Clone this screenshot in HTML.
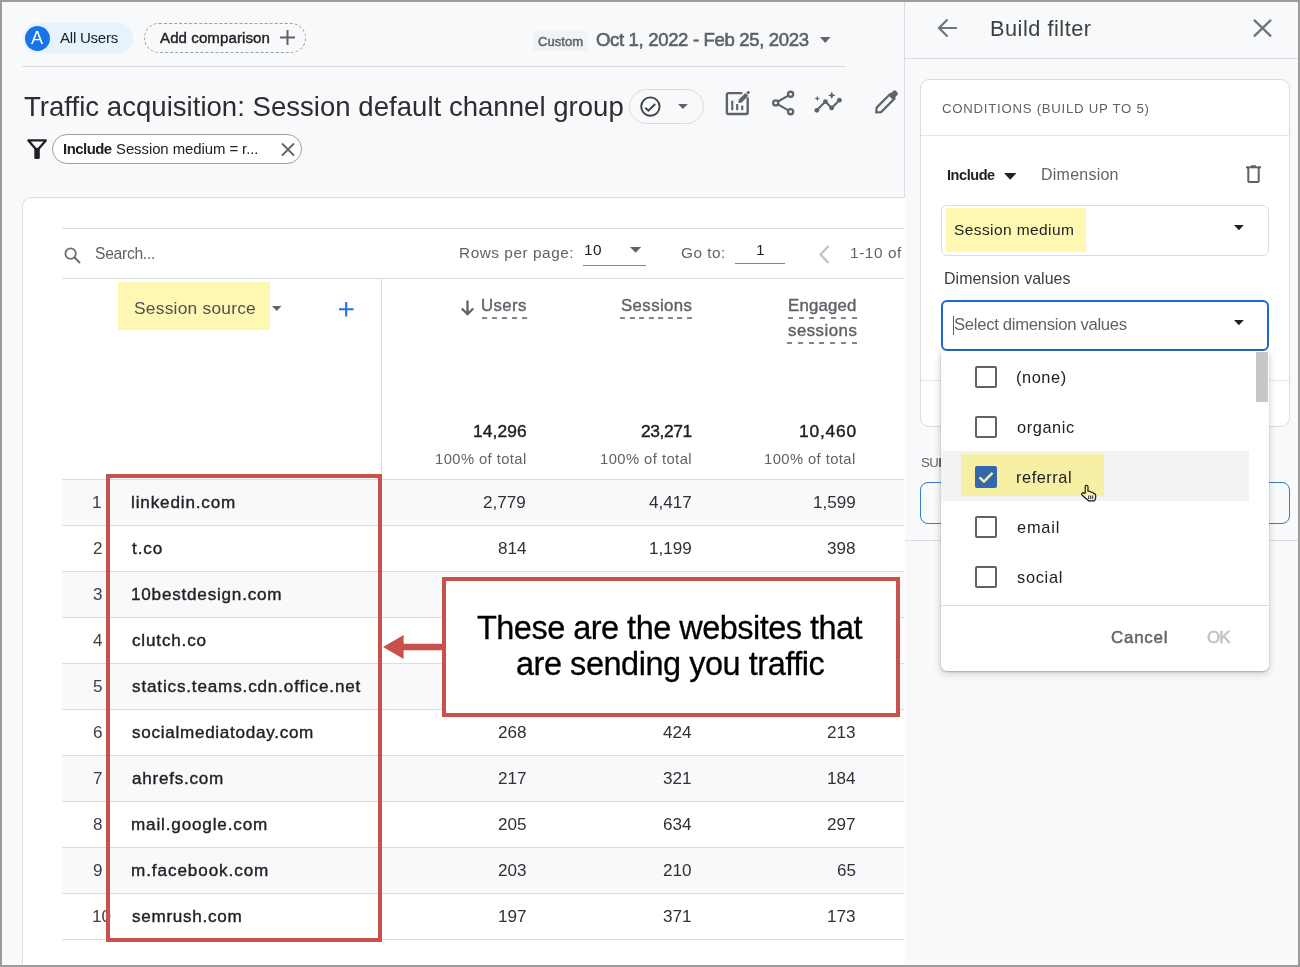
<!DOCTYPE html>
<html><head><meta charset="utf-8"><style>
html,body{margin:0;padding:0;}
body{width:1300px;height:967px;position:relative;overflow:hidden;background:#9c9c9c;font-family:"Liberation Sans",sans-serif;}
.a{position:absolute;box-sizing:border-box;}
.t{position:absolute;white-space:nowrap;will-change:transform;}
svg{position:absolute;overflow:visible;}
</style></head><body>
<!-- frame -->
<div class="a" style="left:2px;top:2px;width:1296px;height:963px;background:#f8f9fa;"></div>
<!-- panel divider -->
<div class="a" style="left:904px;top:2px;width:1px;height:963px;background:#dadce0;"></div>
<div class="a" style="left:905px;top:58px;width:393px;height:1px;background:#dadce0;"></div>

<!-- All users pill -->
<div class="a" style="left:23px;top:23px;width:110px;height:30px;border-radius:15px;background:#e6f3fd;"></div>
<div class="a" style="left:25px;top:26px;width:25px;height:25px;border-radius:50%;background:#1a73e8;"></div>
<!-- Add comparison pill -->
<div class="a" style="left:144px;top:23px;width:162px;height:30px;border-radius:15px;border:1px dashed #9aa0a6;"></div>
<svg style="left:280px;top:30px" width="15" height="15"><path d="M7.5 0V15M0 7.5H15" stroke="#5f6368" stroke-width="2"/></svg>
<!-- header line -->
<div class="a" style="left:22px;top:66px;width:824px;height:1px;background:#dadce0;"></div>
<!-- custom -->
<div class="a" style="left:533px;top:31px;width:55px;height:20px;border-radius:2px;background:#f1f3f4;"></div>
<svg style="left:820px;top:37px" width="11" height="6"><path d="M0 0H10.5L5.25 6Z" fill="#5f6368"/></svg>

<!-- title pill -->
<div class="a" style="left:629px;top:89px;width:75px;height:35px;border-radius:18px;border:1px solid #dadce0;"></div>
<svg style="left:640px;top:96px" width="22" height="22" viewBox="0 0 22 22"><circle cx="10.4" cy="10.6" r="9.2" fill="none" stroke="#3c4043" stroke-width="1.9"/><path d="M5.2 11.6L8.4 14.7L15.2 8" fill="none" stroke="#3c4043" stroke-width="1.9"/></svg>
<svg style="left:678.2px;top:104.2px" width="10" height="6"><path d="M0 0H9.8L4.9 4.9Z" fill="#5f6368"/></svg>
<!-- top icons (page coords) -->
<svg style="left:0;top:0;z-index:2" width="1300" height="200" viewBox="0 0 1300 200">
<g fill="none" stroke="#5f6368">
<path d="M742.3 93.1H728.4Q726.9 93.1 726.9 94.6V112.5Q726.9 114 728.4 114H746.2Q747.7 114 747.7 112.5V97.5" stroke-width="2.4"/>
<circle cx="790.6" cy="94.3" r="2.55" stroke-width="2.3"/><circle cx="775.7" cy="102.9" r="2.55" stroke-width="2.3"/><circle cx="790.6" cy="111.7" r="2.55" stroke-width="2.3"/>
<path d="M778 101.5L788.3 95.6M778 104.3L788.3 110.3" stroke-width="2.1"/>
<path d="M816.8 110.3L825.4 101.6L831.6 107.9L839.4 100.2" stroke-width="2.1"/>
<path d="M876.2 112.5L876.6 107.6L890.2 94L894.7 98.5L881.1 112.1Z" stroke-width="2.2" stroke-linejoin="round"/>
</g>
<g fill="#5f6368">
<rect x="731.2" y="100.7" width="2.1" height="9.5"/><rect x="736.1" y="104" width="2.1" height="6.2"/><rect x="741.2" y="105.6" width="2.1" height="4.6"/>
<path d="M738.3 102.9L738.8 99.5L745.4 92.9L748.3 95.8L741.7 102.4Z"/><circle cx="748.2" cy="92.6" r="1.6"/>
<circle cx="816.8" cy="110.3" r="2.4"/><circle cx="825.4" cy="101.6" r="2.4"/><circle cx="831.6" cy="107.9" r="2.4"/><circle cx="839.4" cy="100.2" r="2.4"/>
<path d="M817.3 95.6L818 97.8L820.2 98.5L818 99.2L817.3 101.4L816.6 99.2L814.4 98.5L816.6 97.8Z"/>
<path d="M831.8 91.6L832.9 94.3L835.6 95.4L832.9 96.5L831.8 99.2L830.7 96.5L828 95.4L830.7 94.3Z"/>
<path d="M888.6 95.6L893.1 91.1Q894.6 89.6 896.1 91.1L897.2 92.2Q898.7 93.7 897.2 95.2L892.7 99.7Z"/>
</g>
<path d="M28.4 140.4H45.8L37.1 150.6Z" fill="none" stroke="#202124" stroke-width="2.3" stroke-linejoin="round"/>
<rect x="34.3" y="148" width="5.5" height="11" rx="1.6" fill="#202124"/>
</svg>
<!-- include chip -->
<div class="a" style="left:52px;top:134px;width:250px;height:30px;border-radius:15px;border:1px solid #9aa0a6;background:#fff;"></div>
<svg style="left:281px;top:142.5px" width="14" height="13" viewBox="0 0 14 13"><path d="M1 0.5L13 12.5M13 0.5L1 12.5" stroke="#5f6368" stroke-width="1.8"/></svg>

<!-- table card -->
<div class="a" style="left:22px;top:197px;width:900px;height:800px;border-radius:9px;border:1px solid #dadce0;background:#fff;"></div>
<div class="a" style="left:0;top:0;width:1300px;height:967px;border:2px solid #9c9c9c;z-index:50"></div>
<div class="a" style="left:62px;top:228px;width:842px;height:1px;background:#dadce0;"></div>
<div class="a" style="left:62px;top:278px;width:842px;height:1px;background:#dadce0;"></div>
<svg style="left:64px;top:247px" width="17" height="17" viewBox="0 0 17 17"><circle cx="6.6" cy="6.6" r="5.2" fill="none" stroke="#6a6e73" stroke-width="1.8"/><path d="M10.3 10.3L16 16" stroke="#6a6e73" stroke-width="2"/></svg>
<svg style="left:629.5px;top:247px" width="12" height="6"><path d="M0 0H11.2L5.6 5.7Z" fill="#5f6368"/></svg>
<div class="a" style="left:583px;top:265px;width:63px;height:1px;background:#80868b;"></div>
<div class="a" style="left:735px;top:263px;width:50px;height:1px;background:#80868b;"></div>
<svg style="left:819px;top:245px" width="11" height="19" viewBox="0 0 11 19"><path d="M9.5 1L1.5 9.5L9.5 18" fill="none" stroke="#bdc1c6" stroke-width="2.2"/></svg>

<!-- header -->
<div class="a" style="left:118px;top:282px;width:152px;height:48px;background:#fff8b3;"></div>
<svg style="left:272px;top:306px" width="10" height="6"><path d="M0 0H9.5L4.75 5Z" fill="#5f6368"/></svg>
<svg style="left:339px;top:301.5px" width="15" height="15"><path d="M7.2 0V14.5M0 7.2H14.5" stroke="#1a73e8" stroke-width="2.1"/></svg>
<div class="a" style="left:381px;top:278px;width:1px;height:661px;background:#dadce0;"></div>
<svg style="left:460px;top:300px" width="15" height="16" viewBox="0 0 15 16"><path d="M7.5 0.5V14M1.8 8.5L7.5 14.2L13.2 8.5" fill="none" stroke="#5f6368" stroke-width="2.3"/></svg>
<!-- dashed underlines -->
<div class="a" style="left:482px;top:317px;width:45px;height:2px;background:repeating-linear-gradient(90deg,#80868b 0 5px,transparent 5px 10px);"></div>
<div class="a" style="left:620px;top:317px;width:72px;height:2px;background:repeating-linear-gradient(90deg,#80868b 0 5px,transparent 5px 9.57px);"></div>
<div class="a" style="left:788px;top:317px;width:69px;height:2px;background:repeating-linear-gradient(90deg,#80868b 0 5px,transparent 5px 10.67px);"></div>
<div class="a" style="left:787px;top:342px;width:70px;height:2px;background:repeating-linear-gradient(90deg,#80868b 0 5px,transparent 5px 10.83px);"></div>

<!-- rows -->
<div class="a" style="left:62px;top:479px;width:842px;height:1px;background:#dadce0;"></div>
<div class="a" style="left:62px;top:480px;width:842px;height:45px;background:#f8f9fa;"></div>
<div class="a" style="left:62px;top:525px;width:842px;height:1px;background:#dadce0;"></div>
<div class="a" style="left:62px;top:571px;width:842px;height:1px;background:#dadce0;"></div>
<div class="a" style="left:62px;top:572px;width:842px;height:45px;background:#f8f9fa;"></div>
<div class="a" style="left:62px;top:617px;width:842px;height:1px;background:#dadce0;"></div>
<div class="a" style="left:62px;top:663px;width:842px;height:1px;background:#dadce0;"></div>
<div class="a" style="left:62px;top:664px;width:842px;height:45px;background:#f8f9fa;"></div>
<div class="a" style="left:62px;top:709px;width:842px;height:1px;background:#dadce0;"></div>
<div class="a" style="left:62px;top:755px;width:842px;height:1px;background:#dadce0;"></div>
<div class="a" style="left:62px;top:756px;width:842px;height:45px;background:#f8f9fa;"></div>
<div class="a" style="left:62px;top:801px;width:842px;height:1px;background:#dadce0;"></div>
<div class="a" style="left:62px;top:847px;width:842px;height:1px;background:#dadce0;"></div>
<div class="a" style="left:62px;top:848px;width:842px;height:45px;background:#f8f9fa;"></div>
<div class="a" style="left:62px;top:893px;width:842px;height:1px;background:#dadce0;"></div>
<div class="a" style="left:62px;top:939px;width:842px;height:1px;background:#dadce0;"></div>
<!-- re-cover panel area (card extends under panel) -->
<div class="a" style="left:905px;top:59px;width:393px;height:906px;background:#f8f9fa;z-index:0"></div>

<!-- red box -->
<div class="a" style="left:106px;top:474px;width:276px;height:468px;border:4px solid #c9514b;z-index:5"></div>
<!-- annotation -->
<div class="a" style="left:442px;top:577px;width:458px;height:140px;border:4px solid #c9514b;background:#fff;"></div>
<svg style="left:382px;top:634px" width="62" height="26" viewBox="0 0 62 26"><path d="M1 13L21.6 1V9.7H61V16.3H21.6V25Z" fill="#c9514b"/></svg>

<!-- ===== right panel ===== -->
<svg style="left:937px;top:18px" width="21" height="20" viewBox="0 0 21 20"><path d="M20 10H2.5M10.5 1.5L2 10L10.5 18.5" fill="none" stroke="#70757a" stroke-width="2.2"/></svg>
<svg style="left:1253px;top:19px" width="19" height="18" viewBox="0 0 19 18"><path d="M1 0.8L18 17.3M18 0.8L1 17.3" stroke="#70757a" stroke-width="2.3"/></svg>

<div class="a" style="left:920px;top:79px;width:370px;height:348px;border-radius:9px;border:1px solid #dadce0;background:#fff;"></div>
<div class="a" style="left:921px;top:135px;width:368px;height:1px;background:#e3e5e8;"></div>
<div class="a" style="left:921px;top:380px;width:368px;height:1px;background:#e3e5e8;"></div>
<svg style="left:1003.5px;top:172.5px" width="13" height="7"><path d="M0 0H12.5L6.25 6.8Z" fill="#202124"/></svg>
<svg style="left:1245px;top:165px" width="17" height="18" viewBox="0 0 17 18"><path d="M1 2.3H16" stroke="#5f6368" stroke-width="2"/><path d="M6 1.2H11" stroke="#5f6368" stroke-width="2"/><path d="M3.3 3V16.2Q3.3 17 4.1 17H12.9Q13.7 17 13.7 16.2V3" fill="none" stroke="#5f6368" stroke-width="2"/></svg>
<!-- session medium select -->
<div class="a" style="left:941px;top:205px;width:328px;height:51px;border-radius:6px;border:1px solid #dadce0;"></div>
<div class="a" style="left:946px;top:208px;width:140px;height:44px;background:#fff8b3;"></div>
<svg style="left:1234px;top:224.5px" width="10" height="5.5"><path d="M0 0H9.8L4.9 5.2Z" fill="#202124"/></svg>
<!-- blue select -->
<div class="a" style="left:941px;top:300px;width:328px;height:51px;border-radius:6px;border:2px solid #1b67cc;background:#fff;"></div>
<div class="a" style="left:953px;top:316px;width:1px;height:19px;background:#1b67cc;"></div>
<svg style="left:1234px;top:319.5px" width="10" height="5.5"><path d="M0 0H9.8L4.9 5.2Z" fill="#202124"/></svg>
<!-- SU section -->
<div class="a" style="left:939px;top:457.6px;width:1.5px;height:9.2px;background:#6a6e73;z-index:1"></div>
<div class="a" style="left:920px;top:482px;width:370px;height:42px;border-radius:8px;border:1px solid #3b78d0;"></div>
<div class="a" style="left:905px;top:540px;width:393px;height:1px;background:#dadce0;"></div>

<!-- dropdown -->
<div class="a" style="left:941px;top:351px;width:328px;height:320px;background:#fff;border-radius:0 0 6px 6px;box-shadow:0 3px 8px rgba(0,0,0,0.16), 0 1px 2px rgba(0,0,0,0.22), -2px 0 4px rgba(0,0,0,0.05);z-index:10"></div>
<div class="a" style="left:1256px;top:352px;width:12px;height:50px;background:#c7c7c7;z-index:11"></div>
<div class="a" style="left:941px;top:451px;width:308px;height:50px;background:#f3f3f3;z-index:11"></div>
<div class="a" style="left:961px;top:454px;width:143px;height:42px;background:#f5f0a3;z-index:11"></div>
<div class="a" style="left:975px;top:365.5px;width:22px;height:22px;border:2px solid #5f6368;border-radius:2px;z-index:11"></div>
<div class="a" style="left:975px;top:415.5px;width:22px;height:22px;border:2px solid #5f6368;border-radius:2px;z-index:11"></div>
<div class="a" style="left:975px;top:465.5px;width:22px;height:22px;background:#3468ab;border-radius:2px;z-index:11"></div>
<svg style="left:975px;top:465.5px;z-index:12" width="22" height="22" viewBox="0 0 22 22"><path d="M4.5 11.3L9 15.6L17.5 6.8" fill="none" stroke="#f5f0a3" stroke-width="2.4"/></svg>
<div class="a" style="left:975px;top:515.5px;width:22px;height:22px;border:2px solid #5f6368;border-radius:2px;z-index:11"></div>
<div class="a" style="left:975px;top:565.5px;width:22px;height:22px;border:2px solid #5f6368;border-radius:2px;z-index:11"></div>
<div class="a" style="left:941px;top:605px;width:328px;height:1px;background:#dadce0;z-index:11"></div>
<!-- hand cursor -->
<svg style="left:1080px;top:484px;z-index:13" width="18" height="19" viewBox="0 0 18 19"><path d="M5.2 9.3V3Q5.2 1.2 6.6 1.2Q8 1.2 8 3V7.2H9.6Q10.8 7.3 10.9 8.2L12.3 8.3Q13.5 8.5 13.6 9.4Q15.6 9.7 15.7 11.5V13.6Q15.7 15.2 14.8 16.1L14.1 16.8H8.6L2.2 11.2Q1.1 10.1 2.1 9.1Q3.2 8.2 4.3 9.2Z" fill="none" stroke="#111" stroke-width="1.15" stroke-linejoin="round"/><path d="M8.7 11.5V15M10.7 11.5V15M12.7 11.5V15" stroke="#111" stroke-width="0.9"/></svg>

<div class="t" style="left:31.00px;top:28.90px;font-size:18.12px;line-height:18.12px;color:#fff">A</div>
<div class="t" style="left:60.20px;top:30.09px;font-size:15.07px;line-height:15.07px;color:#202124;letter-spacing:-0.253px">All Users</div>
<div class="t" style="left:160.00px;top:30.49px;font-size:15.07px;line-height:15.07px;color:#202124;letter-spacing:0.080px;-webkit-text-stroke:0.4px #202124">Add comparison</div>
<div class="t" style="left:537.80px;top:34.81px;font-size:13.04px;line-height:13.04px;color:#5f6368;letter-spacing:0.032px;-webkit-text-stroke:0.5px #5f6368">Custom</div>
<div class="t" style="left:596.40px;top:31.03px;font-size:18.55px;line-height:18.55px;color:#5f6368;letter-spacing:-0.338px;-webkit-text-stroke:0.6px #5f6368">Oct 1, 2022 - Feb 25, 2023</div>
<div class="t" style="left:23.60px;top:92.79px;font-size:27.54px;line-height:27.54px;color:#2b2d30;letter-spacing:0.027px">Traffic acquisition: Session default channel group</div>
<div class="t" style="left:62.70px;top:141.61px;font-size:14.93px;line-height:14.93px;color:#202124;letter-spacing:-0.515px;font-weight:700">Include</div>
<div class="t" style="left:116.40px;top:141.61px;font-size:14.93px;line-height:14.93px;color:#202124;letter-spacing:-0.070px">Session medium = r...</div>
<div class="t" style="left:95.00px;top:245.90px;font-size:15.65px;line-height:15.65px;color:#5f6368;letter-spacing:-0.281px">Search...</div>
<div class="t" style="left:458.70px;top:245.44px;font-size:15.36px;line-height:15.36px;color:#5f6368;letter-spacing:0.538px">Rows per page:</div>
<div class="t" style="left:583.50px;top:242.24px;font-size:15.36px;line-height:15.36px;color:#202124;letter-spacing:0.358px">10</div>
<div class="t" style="left:681.40px;top:244.94px;font-size:15.36px;line-height:15.36px;color:#5f6368;letter-spacing:0.507px">Go to:</div>
<div class="t" style="left:755.70px;top:242.44px;font-size:15.36px;line-height:15.36px;color:#202124">1</div>
<div class="t" style="left:849.50px;top:244.94px;font-size:15.36px;line-height:15.36px;color:#5f6368;letter-spacing:0.592px">1-10 of</div>
<div class="t" style="left:133.50px;top:299.52px;font-size:17.39px;line-height:17.39px;color:#4d5156;letter-spacing:0.229px">Session source</div>
<div class="t" style="left:481.40px;top:297.81px;font-size:16.81px;line-height:16.81px;color:#5f6368;letter-spacing:0.384px;-webkit-text-stroke:0.4px #5f6368">Users</div>
<div class="t" style="left:621.00px;top:297.81px;font-size:16.81px;line-height:16.81px;color:#5f6368;letter-spacing:0.406px;-webkit-text-stroke:0.4px #5f6368">Sessions</div>
<div class="t" style="left:788.30px;top:297.91px;font-size:16.81px;line-height:16.81px;color:#5f6368;letter-spacing:0.198px;-webkit-text-stroke:0.4px #5f6368">Engaged</div>
<div class="t" style="left:788.00px;top:322.91px;font-size:16.81px;line-height:16.81px;color:#5f6368;letter-spacing:0.493px;-webkit-text-stroke:0.4px #5f6368">sessions</div>
<div class="t" style="left:472.70px;top:423.42px;font-size:17.39px;line-height:17.39px;color:#202124;letter-spacing:0.084px;-webkit-text-stroke:0.4px #202124">14,296</div>
<div class="t" style="left:640.50px;top:423.42px;font-size:17.39px;line-height:17.39px;color:#202124;letter-spacing:-0.396px;-webkit-text-stroke:0.4px #202124">23,271</div>
<div class="t" style="left:799.00px;top:423.42px;font-size:17.39px;line-height:17.39px;color:#202124;letter-spacing:0.784px;-webkit-text-stroke:0.4px #202124">10,460</div>
<div class="t" style="left:434.60px;top:452.13px;font-size:14.78px;line-height:14.78px;color:#5f6368;letter-spacing:0.424px">100% of total</div>
<div class="t" style="left:599.70px;top:452.13px;font-size:14.78px;line-height:14.78px;color:#5f6368;letter-spacing:0.449px">100% of total</div>
<div class="t" style="left:764.40px;top:452.13px;font-size:14.78px;line-height:14.78px;color:#5f6368;letter-spacing:0.424px">100% of total</div>
<div class="t" style="left:91.80px;top:493.66px;font-size:17.10px;line-height:17.10px;color:#3c4043">1</div>
<div class="t" style="left:131.20px;top:493.66px;font-size:17.10px;line-height:17.10px;color:#202124;letter-spacing:0.848px;-webkit-text-stroke:0.38px #202124">linkedin.com</div>
<div class="t" style="left:483.33px;top:493.66px;font-size:17.10px;line-height:17.10px;color:#303134">2,779</div>
<div class="t" style="left:648.73px;top:493.66px;font-size:17.10px;line-height:17.10px;color:#303134">4,417</div>
<div class="t" style="left:813.13px;top:493.66px;font-size:17.10px;line-height:17.10px;color:#303134">1,599</div>
<div class="t" style="left:92.80px;top:539.66px;font-size:17.10px;line-height:17.10px;color:#3c4043">2</div>
<div class="t" style="left:132.20px;top:539.66px;font-size:17.10px;line-height:17.10px;color:#202124;letter-spacing:0.885px;-webkit-text-stroke:0.38px #202124">t.co</div>
<div class="t" style="left:497.59px;top:539.66px;font-size:17.10px;line-height:17.10px;color:#303134">814</div>
<div class="t" style="left:648.73px;top:539.66px;font-size:17.10px;line-height:17.10px;color:#303134">1,199</div>
<div class="t" style="left:827.39px;top:539.66px;font-size:17.10px;line-height:17.10px;color:#303134">398</div>
<div class="t" style="left:92.80px;top:585.66px;font-size:17.10px;line-height:17.10px;color:#3c4043">3</div>
<div class="t" style="left:131.20px;top:585.66px;font-size:17.10px;line-height:17.10px;color:#202124;letter-spacing:0.787px;-webkit-text-stroke:0.38px #202124">10bestdesign.com</div>
<div class="t" style="left:92.80px;top:631.66px;font-size:17.10px;line-height:17.10px;color:#3c4043">4</div>
<div class="t" style="left:132.20px;top:631.66px;font-size:17.10px;line-height:17.10px;color:#202124;letter-spacing:0.819px;-webkit-text-stroke:0.38px #202124">clutch.co</div>
<div class="t" style="left:92.80px;top:677.66px;font-size:17.10px;line-height:17.10px;color:#3c4043">5</div>
<div class="t" style="left:132.20px;top:677.66px;font-size:17.10px;line-height:17.10px;color:#202124;letter-spacing:0.833px;-webkit-text-stroke:0.38px #202124">statics.teams.cdn.office.net</div>
<div class="t" style="left:92.80px;top:723.66px;font-size:17.10px;line-height:17.10px;color:#3c4043">6</div>
<div class="t" style="left:132.20px;top:723.66px;font-size:17.10px;line-height:17.10px;color:#202124;letter-spacing:0.710px;-webkit-text-stroke:0.38px #202124">socialmediatoday.com</div>
<div class="t" style="left:497.59px;top:723.66px;font-size:17.10px;line-height:17.10px;color:#303134">268</div>
<div class="t" style="left:662.99px;top:723.66px;font-size:17.10px;line-height:17.10px;color:#303134">424</div>
<div class="t" style="left:827.39px;top:723.66px;font-size:17.10px;line-height:17.10px;color:#303134">213</div>
<div class="t" style="left:92.80px;top:769.66px;font-size:17.10px;line-height:17.10px;color:#3c4043">7</div>
<div class="t" style="left:132.20px;top:769.66px;font-size:17.10px;line-height:17.10px;color:#202124;letter-spacing:0.754px;-webkit-text-stroke:0.38px #202124">ahrefs.com</div>
<div class="t" style="left:497.59px;top:769.66px;font-size:17.10px;line-height:17.10px;color:#303134">217</div>
<div class="t" style="left:662.99px;top:769.66px;font-size:17.10px;line-height:17.10px;color:#303134">321</div>
<div class="t" style="left:827.39px;top:769.66px;font-size:17.10px;line-height:17.10px;color:#303134">184</div>
<div class="t" style="left:92.80px;top:815.66px;font-size:17.10px;line-height:17.10px;color:#3c4043">8</div>
<div class="t" style="left:131.20px;top:815.66px;font-size:17.10px;line-height:17.10px;color:#202124;letter-spacing:0.841px;-webkit-text-stroke:0.38px #202124">mail.google.com</div>
<div class="t" style="left:497.59px;top:815.66px;font-size:17.10px;line-height:17.10px;color:#303134">205</div>
<div class="t" style="left:662.99px;top:815.66px;font-size:17.10px;line-height:17.10px;color:#303134">634</div>
<div class="t" style="left:827.39px;top:815.66px;font-size:17.10px;line-height:17.10px;color:#303134">297</div>
<div class="t" style="left:92.80px;top:861.66px;font-size:17.10px;line-height:17.10px;color:#3c4043">9</div>
<div class="t" style="left:131.20px;top:861.66px;font-size:17.10px;line-height:17.10px;color:#202124;letter-spacing:0.918px;-webkit-text-stroke:0.38px #202124">m.facebook.com</div>
<div class="t" style="left:497.59px;top:861.66px;font-size:17.10px;line-height:17.10px;color:#303134">203</div>
<div class="t" style="left:662.99px;top:861.66px;font-size:17.10px;line-height:17.10px;color:#303134">210</div>
<div class="t" style="left:836.89px;top:861.66px;font-size:17.10px;line-height:17.10px;color:#303134">65</div>
<div class="t" style="left:91.80px;top:907.66px;font-size:17.10px;line-height:17.10px;color:#3c4043">10</div>
<div class="t" style="left:132.20px;top:907.66px;font-size:17.10px;line-height:17.10px;color:#202124;letter-spacing:0.705px;-webkit-text-stroke:0.38px #202124">semrush.com</div>
<div class="t" style="left:497.59px;top:907.66px;font-size:17.10px;line-height:17.10px;color:#303134">197</div>
<div class="t" style="left:662.99px;top:907.66px;font-size:17.10px;line-height:17.10px;color:#303134">371</div>
<div class="t" style="left:827.39px;top:907.66px;font-size:17.10px;line-height:17.10px;color:#303134">173</div>
<div class="t" style="left:477.40px;top:611.81px;font-size:32.46px;line-height:32.46px;color:#000;letter-spacing:-0.502px;-webkit-text-stroke:0.3px #000">These are the websites that</div>
<div class="t" style="left:515.80px;top:648.01px;font-size:32.46px;line-height:32.46px;color:#000;letter-spacing:-0.450px;-webkit-text-stroke:0.3px #000">are sending you traffic</div>
<div class="t" style="left:990.00px;top:17.52px;font-size:21.74px;line-height:21.74px;color:#3c4043;letter-spacing:0.516px">Build filter</div>
<div class="t" style="left:941.70px;top:101.99px;font-size:13.19px;line-height:13.19px;color:#5f6368;letter-spacing:0.744px">CONDITIONS (BUILD UP TO 5)</div>
<div class="t" style="left:946.50px;top:167.78px;font-size:14.49px;line-height:14.49px;color:#202124;letter-spacing:-0.424px;font-weight:700">Include</div>
<div class="t" style="left:1040.70px;top:166.95px;font-size:15.94px;line-height:15.94px;color:#5f6368;letter-spacing:0.272px">Dimension</div>
<div class="t" style="left:954.00px;top:222.02px;font-size:15.51px;line-height:15.51px;color:#202124;letter-spacing:0.410px">Session medium</div>
<div class="t" style="left:943.50px;top:270.75px;font-size:15.94px;line-height:15.94px;color:#3c4043;letter-spacing:0.045px">Dimension values</div>
<div class="t" style="left:954.20px;top:316.73px;font-size:16.67px;line-height:16.67px;color:#5f6368;letter-spacing:-0.295px">Select dimension values</div>
<div class="t" style="left:1015.80px;top:369.18px;font-size:16.38px;line-height:16.38px;color:#202124;letter-spacing:0.572px;z-index:12">(none)</div>
<div class="t" style="left:1016.80px;top:419.18px;font-size:16.38px;line-height:16.38px;color:#202124;letter-spacing:0.587px;z-index:12">organic</div>
<div class="t" style="left:1015.80px;top:469.18px;font-size:16.38px;line-height:16.38px;color:#202124;letter-spacing:0.545px;z-index:12">referral</div>
<div class="t" style="left:1016.80px;top:519.18px;font-size:16.38px;line-height:16.38px;color:#202124;letter-spacing:0.810px;z-index:12">email</div>
<div class="t" style="left:1016.80px;top:569.18px;font-size:16.38px;line-height:16.38px;color:#202124;letter-spacing:0.722px;z-index:12">social</div>
<div class="t" style="left:920.60px;top:456.39px;font-size:13.19px;line-height:13.19px;color:#5f6368;letter-spacing:-0.600px;z-index:1">SU</div>
<div class="t" style="left:1111.30px;top:630.49px;font-size:16.96px;line-height:16.96px;color:#5f6368;letter-spacing:0.748px;z-index:12;-webkit-text-stroke:0.45px #5f6368">Cancel</div>
<div class="t" style="left:1206.60px;top:630.49px;font-size:16.96px;line-height:16.96px;color:#bdc1c6;letter-spacing:-0.975px;z-index:12;-webkit-text-stroke:0.45px #bdc1c6">OK</div>
</body></html>
